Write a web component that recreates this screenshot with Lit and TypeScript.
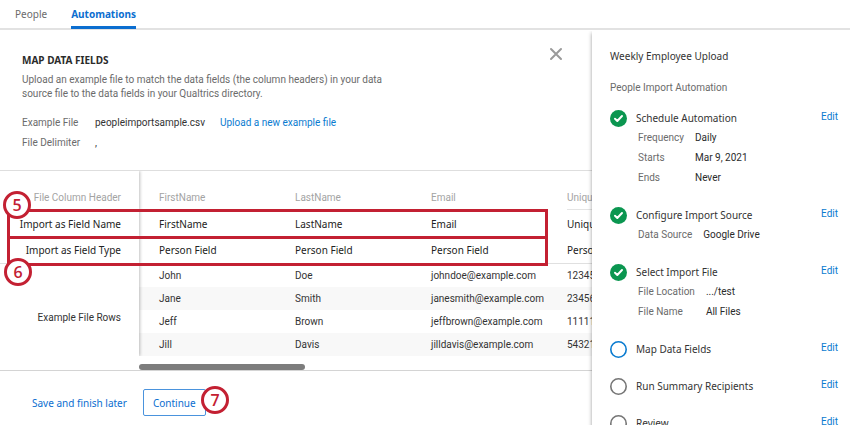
import { LitElement, html, css, svg, nothing } from "lit";
import { customElement, property } from "lit/decorators.js";

interface Step {
  title: string;
  state: "done" | "current" | "todo";
  details: [string, string][];
}

const steps: Step[] = [
  {
    title: "Schedule Automation",
    state: "done",
    details: [
      ["Frequency", "Daily"],
      ["Starts", "Mar 9, 2021"],
      ["Ends", "Never"],
    ],
  },
  { title: "Configure Import Source", state: "done", details: [["Data Source", "Google Drive"]] },
  {
    title: "Select Import File",
    state: "done",
    details: [
      ["File Location", ".../test"],
      ["File Name", "All Files"],
    ],
  },
  { title: "Map Data Fields", state: "current", details: [] },
  { title: "Run Summary Recipients", state: "todo", details: [] },
  { title: "Review", state: "todo", details: [] },
];

const columns = ["FirstName", "LastName", "Email", "Unique"];

const rows = [
  ["John", "Doe", "johndoe@example.com", "12345"],
  ["Jane", "Smith", "janesmith@example.com", "23456"],
  ["Jeff", "Brown", "jeffbrown@example.com", "11111"],
  ["Jill", "Davis", "jilldavis@example.com", "54321"],
];

const headingFont = css`"Noto Sans", "Liberation Sans", sans-serif`;

@customElement("top-tabs")
export class TopTabs extends LitElement {
  static styles = css`
    :host {
      display: block;
    }
    .tabs {
      display: flex;
      gap: 24px;
      height: 28px;
      padding-left: 15px;
      border-bottom: 2px solid #e2e2e2;
      font-family: ${headingFont};
    }
    .tab {
      height: 26px;
      line-height: 28px;
      font-size: 10px;
      color: #6b6b6b;
      text-decoration: none;
    }
    .active {
      font-weight: 700;
      color: #0b6ed0;
      border-bottom: 3px solid #0b6ed0;
    }
  `;

  render() {
    return html`<nav class="tabs">
      <a class="tab" href="#people">People</a>
      <a class="tab active" href="#automations" aria-current="page">Automations</a>
    </nav>`;
  }
}

@customElement("file-header")
export class FileHeader extends LitElement {
  static styles = css`
    :host {
      display: block;
      border-bottom: 1px solid #dedede;
    }
    .head {
      display: flex;
      justify-content: space-between;
      align-items: flex-start;
      height: 118px;
      padding: 16px 28px 6px 22px;
    }
    .title {
      margin: 6px 0 5px;
      font: 700 10px/16px ${headingFont};
      color: #2b2b2b;
    }
    .text {
      max-width: 368px;
      margin: 0 0 12px;
      font-size: 10px;
      line-height: 14px;
      color: #6b6b6b;
    }
    .facts {
      display: grid;
      grid-template-columns: 73px auto auto;
      margin: 0;
      justify-content: start;
      font-size: 10px;
      line-height: 20px;
      color: #6b6b6b;
    }
    .value {
      color: #333;
    }
    .upload {
      margin-left: 15px;
      color: #0a7bd0;
      text-decoration: none;
    }
    .close {
      display: flex;
      padding: 0;
      border: 0;
      background: none;
    }
  `;

  render() {
    return html`<section class="head">
      <div>
        <h2 class="title">MAP DATA FIELDS</h2>
        <p class="text">
          Upload an example file to match the data fields (the column headers) in your data source
          file to the data fields in your Qualtrics directory.
        </p>
        <div class="facts">
          <span>Example File</span>
          <span class="value">peopleimportsample.csv</span>
          <a class="upload" href="#upload">Upload a new example file</a>
          <span>File Delimiter</span>
          <span class="value">,</span>
        </div>
      </div>
      <button class="close" aria-label="Close">
        <svg width="16" height="16" viewBox="0 0 16 16" fill="none" stroke="#9a9a9a" stroke-width="2" stroke-linecap="round">
          <path d="M3 3 13 13M13 3 3 13" />
        </svg>
      </button>
    </section>`;
  }
}

@customElement("mapping-table")
export class MappingTable extends LitElement {
  static styles = css`
    :host {
      display: block;
      overflow: hidden;
      border-bottom: 1px solid #d4d4d4;
    }
    .grid {
      width: 683px;
      table-layout: fixed;
      border-collapse: separate;
      border-spacing: 0;
      text-align: left;
      white-space: nowrap;
      color: #333;
    }
    .labels {
      width: 139px;
    }
    th,
    td {
      box-sizing: border-box;
      padding: 0 0 0 20px;
      font-weight: 400;
      font-size: 10px;
    }
    .label {
      position: relative;
      padding: 0 18px 0 0;
      text-align: right;
      background: #fff;
      box-shadow: 1px 0 3px rgba(0, 0, 0, 0.25);
      clip-path: inset(0 -5px 0 0);
    }
    .source th {
      height: 39px;
      padding-top: 14px;
      color: #a3a3a3;
    }
    .underlined {
      background: linear-gradient(#e4e4e4, #e4e4e4) no-repeat 20px 100% / 120px 1px;
    }
    .field th,
    .field td {
      height: 27px;
      font-family: ${headingFont};
      color: #222;
    }
    .type th,
    .type td {
      border-bottom: 1px solid #e0e0e0;
    }
    .row td {
      height: 23px;
    }
    .row:nth-child(even) td {
      background: #f8f8f8;
    }
    .row .label {
      padding-top: 14px;
    }
    .track {
      height: 6px;
      margin: 8px 0 0 139px;
    }
    .thumb {
      width: 166px;
      height: 6px;
      border-radius: 3px;
      background: #7d7d7d;
    }
  `;

  render() {
    return html`<table class="grid">
        <colgroup>
          <col class="labels" />
          ${columns.map(() => html`<col />`)}
        </colgroup>
        <thead>
          <tr class="source">
            <th class="label" scope="row">File Column Header</th>
            ${columns.map((c) => html`<th class="underlined" scope="col">${c}</th>`)}
          </tr>
          <tr class="field">
            <th class="label" scope="row">Import as Field Name</th>
            ${columns.map((c) => html`<td>${c}</td>`)}
          </tr>
          <tr class="field type">
            <th class="label" scope="row">Import as Field Type</th>
            ${columns.map(() => html`<td>Person Field</td>`)}
          </tr>
        </thead>
        <tbody>
          ${rows.map(
            (r, i) => html`<tr class="row">
              ${i === 0
                ? html`<th class="label" scope="rowgroup" rowspan=${rows.length}>Example File Rows</th>`
                : nothing}
              ${r.map((v) => html`<td>${v}</td>`)}
            </tr>`
          )}
        </tbody>
      </table>
      <div class="track"><div class="thumb"></div></div>`;
  }
}

@customElement("step-list")
export class StepList extends LitElement {
  static styles = css`
    :host {
      display: block;
      padding: 15px 12px 0 18px;
    }
    .name {
      margin: 0;
      font: 400 10px/20px ${headingFont};
      color: #333;
    }
    .kind {
      margin: 12px 0 10px;
      font-size: 10px;
      line-height: 20px;
      color: #6b6b6b;
    }
    .steps {
      display: grid;
      gap: 17px;
      margin: 0;
      padding: 0;
      list-style: none;
    }
    .bar {
      display: flex;
      align-items: center;
      gap: 9px;
      height: 20px;
    }
    .mark {
      flex: none;
    }
    .title {
      flex: 1;
      margin: 0;
      font: 400 10px/20px ${headingFont};
      color: #333;
    }
    .edit {
      padding-bottom: 4px;
      font-size: 10px;
      color: #0a7bd0;
      text-decoration: none;
    }
    .details {
      display: grid;
      grid-template-columns: auto auto;
      justify-content: start;
      column-gap: 11px;
      margin: 0 0 0 28px;
      font-size: 10px;
      line-height: 20px;
      color: #6b6b6b;
    }
    .value {
      margin: 0;
      color: #2b2b2b;
    }
  `;

  private mark(state: Step["state"]) {
    return html`<svg class="mark" width="17" height="17" viewBox="0 0 17 17" fill="none">
      ${state === "done"
        ? svg`<circle cx="8.5" cy="8.5" r="8.5" fill="#0b9650" />
            <path d="M5 8.8 7.3 11 12 6" stroke="#fff" stroke-width="2" stroke-linecap="round" stroke-linejoin="round" />`
        : svg`<circle cx="8.5" cy="8.5" r="7.7" stroke=${state === "current" ? "#0a7bd0" : "#767676"} stroke-width="1.6" />`}
    </svg>`;
  }

  render() {
    return html`<h2 class="name">Weekly Employee Upload</h2>
      <p class="kind">People Import Automation</p>
      <ol class="steps">
        ${steps.map(
          (s) => html`<li>
            <div class="bar">
              ${this.mark(s.state)}
              <h3 class="title">${s.title}</h3>
              <a class="edit" href="#edit" aria-label="Edit ${s.title}">Edit</a>
            </div>
            ${s.details.length
              ? html`<dl class="details">
                  ${s.details.map(([k, v]) => html`<dt>${k}</dt><dd class="value">${v}</dd>`)}
                </dl>`
              : nothing}
          </li>`
        )}
      </ol>`;
  }
}

@customElement("callout-number")
export class CalloutNumber extends LitElement {
  @property() value = "";

  static styles = css`
    :host {
      box-sizing: border-box;
      display: flex;
      align-items: center;
      justify-content: center;
      width: 28px;
      height: 28px;
      border: 3px solid #c32032;
      border-radius: 50%;
      background: #fff;
      color: #c32032;
      font: 600 16px/22px "Open Sans", "Noto Sans", sans-serif;
    }
  `;

  render() {
    return html`${this.value}`;
  }
}

@customElement("app-root")
export class AppRoot extends LitElement {
  static styles = css`
    :host {
      display: flex;
      flex-direction: column;
      position: relative;
      height: 100vh;
      overflow: hidden;
      background: #fff;
      font-family: Roboto, "Liberation Sans", sans-serif;
    }
    .body {
      flex: 1;
      display: grid;
      grid-template-columns: minmax(0, 1fr) 258px;
      min-height: 0;
      overflow: hidden;
    }
    .side {
      margin-top: 1px;
      background: #fff;
      box-shadow: 0 2px 4px rgba(0, 0, 0, 0.4);
      clip-path: inset(0 0 0 -6px);
    }
    .actions {
      display: flex;
      align-items: center;
      gap: 16px;
      padding: 18px 0 0 32px;
    }
    .later,
    .next {
      height: 27px;
      padding: 0;
      border: 0;
      background: none;
      font: 10px ${headingFont};
      color: #0b6ed0;
    }
    .next {
      padding: 0 9px;
      border: 1px solid #4a93dd;
      border-radius: 2px;
    }
    .frame,
    .dot {
      position: absolute;
    }
    .frame {
      box-sizing: border-box;
      left: 7px;
      width: 541px;
      height: 30px;
      border: 3px solid #c32032;
    }
    .frame-name {
      top: 209px;
    }
    .frame-type {
      top: 236px;
    }
    .dot-name {
      left: 3px;
      top: 191px;
    }
    .dot-type {
      left: 4px;
      top: 258px;
    }
    .dot-next {
      left: 201px;
      top: 386px;
    }
  `;

  render() {
    return html`<top-tabs></top-tabs>
      <div class="body">
        <main>
          <file-header></file-header>
          <mapping-table></mapping-table>
          <div class="actions">
            <button class="later">Save and finish later</button>
            <button class="next">Continue</button>
          </div>
        </main>
        <aside class="side"><step-list></step-list></aside>
      </div>
      <div class="frame frame-name"></div>
      <div class="frame frame-type"></div>
      <callout-number class="dot dot-name" value="5"></callout-number>
      <callout-number class="dot dot-type" value="6"></callout-number>
      <callout-number class="dot dot-next" value="7"></callout-number>`;
  }
}
